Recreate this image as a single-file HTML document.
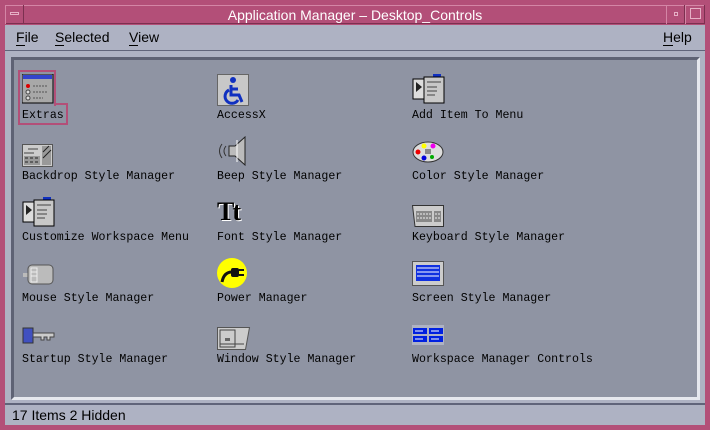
<!DOCTYPE html>
<html><head><meta charset="utf-8"><style>
*{margin:0;padding:0;box-sizing:border-box}
body{width:710px;height:430px;background:#b34f78;position:relative;overflow:hidden;font-family:"Liberation Sans",sans-serif}
.abs{position:absolute}
.title{left:5px;top:5px;width:700px;height:19px;background:#b34f78;border-top:1px solid #d486a6;border-bottom:1px solid #7c3050}
.title span{position:absolute;left:0;right:0;text-align:center;color:#fff;font-size:14px;top:1px}
.btn{position:absolute;top:5px;height:19px;border-left:1px solid #d486a6;border-right:1px solid #7c3050}
.menu{left:5px;top:25px;width:700px;height:26px;background:#aeb2c3;border-bottom:1px solid #60647a}
.menu span{position:absolute;top:4px;font-size:14px;color:#000}
.menu u{text-decoration:none;border-bottom:1px solid #000}
.body{left:5px;top:51px;width:700px;height:352px;background:#aeb2c3}
.panel{left:11px;top:57px;width:689px;height:343px;background:#8f94a3;border-top:3px solid #5e6274;border-left:3px solid #5e6274;border-right:3px solid #e6e8ee;border-bottom:3px solid #e6e8ee}
.status{left:5px;top:403px;width:700px;height:22px;background:#aeb2c3;border-top:2px solid #60647a}
.status span{position:absolute;left:7px;top:2px;font-size:14px}
.lbl{position:absolute;font-family:"Liberation Mono",monospace;font-size:11.6px;color:#000;white-space:pre;line-height:14px}
svg{position:absolute}
</style></head><body>
<div class="abs title"><span>Application Manager – Desktop_Controls</span></div>
<div class="btn" style="left:5px;width:19px"><div class="abs" style="left:4px;top:7px;width:9px;height:3px;border:1px solid #e6b0c6"></div></div>
<div class="btn" style="left:666px;width:19px"><div class="abs" style="left:7px;top:7px;width:4px;height:4px;border:1px solid #e6b0c6"></div></div>
<div class="btn" style="left:685px;width:20px"><div class="abs" style="left:4px;top:3px;width:11px;height:11px;border:1px solid #e6b0c6"></div></div>
<div class="abs menu"><span style="left:11px"><u>F</u>ile</span><span style="left:50px"><u>S</u>elected</span><span style="left:124px"><u>V</u>iew</span><span style="left:658px"><u>H</u>elp</span></div>
<div class="abs body"></div>
<div class="abs panel"></div>
<div class="abs status"><span>17 Items 2 Hidden</span></div>

<div class="abs" style="left:18px;top:70px;width:38px;height:36px;border:2px solid #b34f78;border-bottom:none"></div>
<div class="abs" style="left:18px;top:104px;width:50px;height:21px;border:2px solid #b34f78;border-top:none"></div>
<div class="abs" style="left:54px;top:103px;width:14px;height:2px;background:#b34f78"></div>
<svg style="left:22px;top:74px" width="32" height="30"><rect x="0" y="0" width="31" height="29" fill="#a8a8a8" stroke="#000"/><rect x="1" y="1" width="29" height="4" fill="#3344cc"/><circle cx="6" cy="12" r="2" fill="#d00"/><circle cx="6" cy="18" r="2" fill="#ddd" stroke="#444"/><circle cx="6" cy="24" r="2" fill="#ddd" stroke="#444"/><path d="M11 12h14M11 18h14M11 24h10" stroke="#555" stroke-dasharray="2 1"/></svg>
<div class="lbl" style="left:22px;top:109px">Extras</div>

<svg style="left:217px;top:74px" width="32" height="32"><rect x="0.5" y="0.5" width="31" height="31" fill="#c8c8c8" stroke="#666"/><circle cx="16" cy="6" r="3" fill="#1030c0"/><path d="M14 11v10h8l3 7M14 15h7M12 16a7 7 0 1 0 9 10" stroke="#1030c0" stroke-width="3" fill="none"/></svg>
<div class="lbl" style="left:217px;top:109px">AccessX</div>

<svg style="left:412px;top:73px" width="34" height="32"><path d="M1 6h20v20H1z" fill="#ddd" stroke="#000"/><rect x="21" y="1" width="8" height="4" fill="#1030c0"/><path d="M4 9l6 5-6 5z" fill="#222"/><rect x="12" y="4" width="20" height="26" fill="#c8c8c8" stroke="#000"/><path d="M15 9h14M15 14h10M15 18h10M15 22h8" stroke="#444"/></svg>
<div class="lbl" style="left:412px;top:109px">Add Item To Menu</div>

<svg style="left:22px;top:144px" width="32" height="24"><rect x="0.5" y="0.5" width="30" height="22" fill="#ccc" stroke="#555"/><path d="M2 12h16v9H2zM20 2h9v19h-9z" fill="#999"/><path d="M3 14h3M8 14h3M13 14h3M3 18h3M8 18h3M13 18h3M21 8l6-6M21 14l8-8" stroke="#222"/><path d="M2 9h10M6 5h10" stroke="#444"/></svg>
<div class="lbl" style="left:22px;top:170px">Backdrop Style Manager</div>

<svg style="left:217px;top:136px" width="32" height="32"><path d="M12 10h6l10-9v28l-10-9h-6z" fill="#bbb" stroke="#222"/><path d="M20 4v22" stroke="#fff"/><path d="M9 10q-4 5 0 10M5 8q-5 7 0 14" stroke="#333" fill="none"/></svg>
<div class="lbl" style="left:217px;top:170px">Beep Style Manager</div>

<svg style="left:412px;top:140px" width="34" height="26"><ellipse cx="16" cy="12" rx="15" ry="10" fill="#ddd" stroke="#333"/><circle cx="12" cy="6" r="2.5" fill="#ff0"/><circle cx="21" cy="6" r="2.5" fill="#e0e"/><circle cx="6" cy="12" r="2.5" fill="#e00"/><circle cx="12" cy="18" r="2.5" fill="#00d"/><circle cx="20" cy="17" r="2" fill="#0a0"/><rect x="13" y="9" width="6" height="5" fill="#888"/></svg>
<div class="lbl" style="left:412px;top:170px">Color Style Manager</div>

<svg style="left:22px;top:196px" width="34" height="32"><path d="M1 6h20v20H1z" fill="#ddd" stroke="#000"/><rect x="21" y="1" width="8" height="4" fill="#1030c0"/><path d="M4 9l6 5-6 5z" fill="#222"/><rect x="12" y="4" width="20" height="26" fill="#c8c8c8" stroke="#000"/><path d="M15 9h14M15 14h10M15 18h10M15 22h8" stroke="#444"/></svg>
<div class="lbl" style="left:22px;top:231px">Customize Workspace Menu</div>

<div class="abs" style="left:217px;top:198px;font-family:'Liberation Serif',serif;font-weight:bold;font-size:26px;line-height:28px;color:#000;letter-spacing:-2px;text-shadow:1px 1px #fff">Tt</div>
<div class="lbl" style="left:217px;top:231px">Font Style Manager</div>

<svg style="left:412px;top:205px" width="32" height="22"><path d="M0.5 0.5h31v21H3z" fill="#ccc" stroke="#333"/><rect x="4" y="6" width="16" height="11" fill="#888"/><rect x="22" y="6" width="7" height="11" fill="#888"/><path d="M5 9h14M5 13h14M23 9h5M23 13h5" stroke="#eee" stroke-dasharray="2 1"/></svg>
<div class="lbl" style="left:412px;top:231px">Keyboard Style Manager</div>

<svg style="left:22px;top:264px" width="34" height="22"><path d="M1 9h6v4H1z" fill="#bbb"/><rect x="6" y="1" width="25" height="19" rx="4" fill="#bbb" stroke="#555"/><path d="M9 4h6v14H9zM9 8h6M9 12h6" stroke="#eee" fill="none"/></svg>
<div class="lbl" style="left:22px;top:292px">Mouse Style Manager</div>

<svg style="left:217px;top:258px" width="32" height="32"><circle cx="15" cy="15" r="15" fill="#ff0"/><path d="M5 24q2-10 10-10" stroke="#111" stroke-width="3" fill="none"/><rect x="14" y="10" width="8" height="9" rx="2" fill="#111"/><path d="M22 12h5M22 17h5" stroke="#111" stroke-width="2"/></svg>
<div class="lbl" style="left:217px;top:292px">Power Manager</div>

<svg style="left:412px;top:261px" width="32" height="26"><rect x="0.5" y="0.5" width="31" height="24" fill="#ccc" stroke="#555"/><rect x="4" y="4" width="24" height="16" fill="#1030e0"/><path d="M5 7h22M5 11h22M5 15h22" stroke="#fff"/></svg>
<div class="lbl" style="left:412px;top:292px">Screen Style Manager</div>

<svg style="left:22px;top:327px" width="34" height="18"><rect x="1" y="1" width="10" height="15" fill="#4050c0" stroke="#333"/><path d="M11 6h21v4h-4v3h-3v-3h-3v3h-3v-3h-8z" fill="#ccc" stroke="#444"/></svg>
<div class="lbl" style="left:22px;top:353px">Startup Style Manager</div>

<svg style="left:217px;top:327px" width="34" height="24"><path d="M0.5 0.5h32l-4 22H0.5z" fill="#ccc" stroke="#555"/><path d="M3 3h15v17H3zM18 3v17M3 17h24" stroke="#444" fill="none"/><rect x="8" y="11" width="5" height="3" fill="#666"/></svg>
<div class="lbl" style="left:217px;top:353px">Window Style Manager</div>

<svg style="left:412px;top:325px" width="34" height="20"><rect x="0" y="0" width="32" height="20" fill="#aeb2c3"/><rect x="1" y="3" width="14" height="6" fill="#0020e0"/><rect x="17" y="3" width="14" height="6" fill="#0020e0"/><rect x="1" y="11" width="14" height="6" fill="#0020e0"/><rect x="17" y="11" width="14" height="6" fill="#0020e0"/><path d="M3 6h8M19 6h8M3 14h8M19 14h8" stroke="#fff"/></svg>
<div class="lbl" style="left:412px;top:353px">Workspace Manager Controls</div>
</body></html>
